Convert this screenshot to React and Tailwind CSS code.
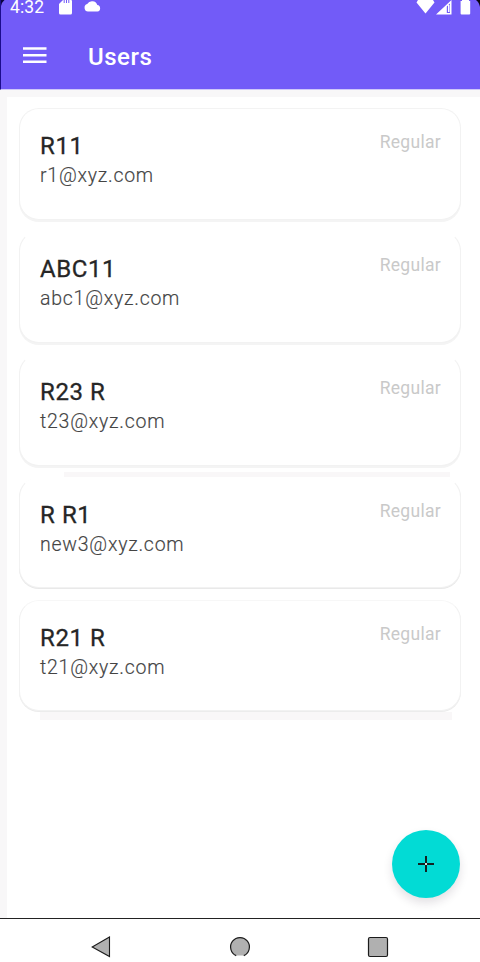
const users = [
  { name: 'R11', email: 'r1@xyz.com', edge: 'border-t-[#f3f3f3]', shade: 'h-[112px] shadow-[0_2px_0_#f4f4f4]' },
  { name: 'ABC11', email: 'abc1@xyz.com', edge: 'border-t-transparent', shade: 'h-[112px] shadow-[0_2px_0_#f4f4f4]' },
  { name: 'R23 R', email: 't23@xyz.com', edge: 'border-t-transparent', shade: 'h-[112px] shadow-[0_2px_0_#f4f4f4]', band: true },
  { name: 'R R1', email: 'new3@xyz.com', edge: 'border-t-transparent', shade: 'mb-px h-[111px] shadow-[0_1px_0_#e9e9e9]' },
  { name: 'R21 R', email: 't21@xyz.com', edge: 'border-t-[#f7f7f7]', shade: 'h-[111px] shadow-[0_1px_0_#ececec]' },
];

function StatusBar() {
  return (
    <div className="flex h-[17px] items-start justify-between pl-[9px] pr-[9px] text-white">
      <div className="flex items-start">
        <span className="w-[49px] text-[17.5px] leading-[14px] tracking-[0.1px]">4:32</span>
        <svg width="13" height="15" viewBox="0 0 13 15" fill="currentColor">
          <path d="M4 0H12Q13 0 13 1V13Q13 14.5 11.5 14.5H1.5Q0 14.5 0 13V4Z" />
          <path d="M5.2 0V3M7.5 0V3M9.8 0V3" stroke="#725bf8" strokeWidth="1" />
        </svg>
        <svg className="ml-3" width="17" height="12" viewBox="0 0 17 12" fill="currentColor">
          <path d="M4 11.5A3.8 3.8 0 0 1 3.2 4.1A5.5 5.5 0 0 1 13.3 5A3.3 3.3 0 0 1 13.5 11.5Z" />
        </svg>
      </div>
      <div className="flex items-start">
        <svg width="19" height="14" viewBox="0 0 19 14" fill="currentColor">
          <path d="M2 0H17L18.5 2.5L9.5 13.5L.5 2.5Z" />
        </svg>
        <svg className="ml-px" width="16" height="15" viewBox="0 0 16 15" fill="currentColor">
          <path fillRule="evenodd" d="M0 14.5L15.5 0V14.5ZM10.8 6.6V13H14V3.5Z" />
          <path d="M12 5h1.5v7h-1.5z" />
        </svg>
        <svg className="ml-2" width="11" height="15" viewBox="0 0 11 15" fill="currentColor">
          <path d="M2 0H9V1H10.2V13.5Q10.2 14.5 9.2 14.5H1.6Q.6 14.5 .6 13.5V1H2Z" />
        </svg>
      </div>
    </div>
  );
}

function Header() {
  return (
    <header className="relative h-[90px] shrink-0 border-b border-b-[#cfc8fa] border-l border-l-[#1c0c8c] bg-[#725bf8]">
      <svg className="absolute left-0 top-0" width="4" height="6" viewBox="0 0 4 6">
        <path d="M0 0H3.5Q1 2 0 6Z" fill="#0b0340" />
      </svg>
      <svg className="absolute right-0 top-0" width="4" height="7" viewBox="0 0 4 7">
        <path d="M0 0H4V7Q3 2 0 0Z" fill="#08030f" />
      </svg>
      <StatusBar />
      <div className="flex h-[78px] items-center pl-[22px]">
        <svg className="-mt-px" width="24" height="17" viewBox="0 0 24 17" fill="#fff">
          <path d="M0 .3h23.5v2.4H0zM0 7h23.5v2.4H0zM0 13.6h23.5V16H0z" />
        </svg>
        <h1 className="ml-[41px] mt-[2px] text-[24px] font-medium leading-7 tracking-[0.5px] text-white">Users</h1>
      </div>
    </header>
  );
}

function UserCard({ user }) {
  return (
    <li
      className={`relative flex items-start justify-between rounded-[20px] border border-x-[#f2f2f2] border-b-[#f2f2f2] bg-white pl-5 pr-[19px] ${user.edge} ${user.shade}`}
    >
      <div className="pt-[23px]">
        <h2 className="text-[24px] font-normal leading-[28px] tracking-[0.6px] text-[#262626] [-webkit-text-stroke:0.3px_#262626]">
          {user.name}
        </h2>
        <p className="mt-[3px] text-[19.5px] font-light leading-[26px] tracking-[0.75px] text-[#444] [-webkit-text-stroke:0.15px_#444]">
          {user.email}
        </p>
      </div>
      <span className="pt-[21px] text-[17.5px] leading-6 tracking-[0.3px] text-[#c9c9c9]">Regular</span>
      {user.band && <div className="absolute left-[44px] top-[117px] z-10 h-[5px] w-[386px] bg-[#f9f7f8]" />}
    </li>
  );
}

function NavigationBar() {
  return (
    <nav className="flex h-11 shrink-0 items-start border-t border-[#222] bg-white pl-[91px] pt-[17px]">
      <svg width="20" height="22" viewBox="0 0 20 22">
        <path d="M18.5 1V20.5L1.2 11Z" fill="#b0b0b0" stroke="#1b1b1b" strokeWidth="1.1" />
      </svg>
      <svg className="ml-[118px]" width="22" height="22" viewBox="0 0 22 22">
        <path d="M7.2 19.6A9.4 9.4 0 1 1 14.8 19.6Z" fill="#b0b0b0" />
        <path d="M7.2 19.6A9.4 9.4 0 1 1 14.8 19.6" fill="none" stroke="#1b1b1b" strokeWidth="1.2" />
      </svg>
      <svg className="ml-[116px]" width="22" height="22" viewBox="0 0 22 22">
        <rect x="1.5" y="1.5" width="19" height="19" rx="1.5" fill="#b0b0b0" stroke="#1b1b1b" strokeWidth="1.2" />
      </svg>
    </nav>
  );
}

export default function App() {
  return (
    <div className="relative flex h-[962px] w-[480px] flex-col bg-white font-['Roboto',sans-serif]">
      <Header />
      <main className="min-h-0 flex-1 border-l-[7px] border-t-[7px] border-[#f8f7f8] bg-white">
        <ul className="ml-3 mt-[11px] flex w-[442px] flex-col gap-[10.9px]">
          {users.map((user) => (
            <UserCard key={user.email} user={user} />
          ))}
        </ul>
        <div className="ml-[33px] mt-px h-[8px] w-[412px] bg-[#f9f7f8]" />
      </main>
      <button
        aria-label="Add user"
        className="absolute left-[392px] top-[830px] flex h-[68px] w-[68px] items-center justify-center rounded-full bg-[#02dbd5] shadow-[0_5px_10px_rgba(40,20,50,0.13)]"
      >
        <svg width="18" height="18" viewBox="0 0 18 18">
          <path d="M9 1V17M1 9H17" stroke="#142222" strokeWidth="2" />
          <path d="M8 8h2v2H8z" fill="#d5e5e5" />
        </svg>
      </button>
      <NavigationBar />
    </div>
  );
}
